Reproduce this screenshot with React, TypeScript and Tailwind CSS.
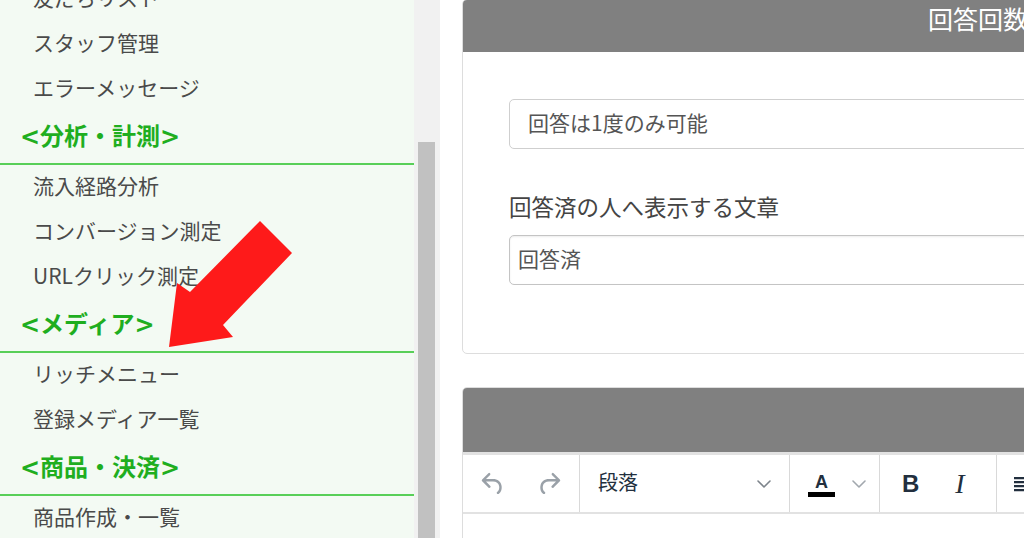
import React from "react";

const Item = ({ label }: { label: string }) => (
  <div className="h-[45px] flex items-center pl-[33px] pb-[4px] text-[21px] leading-none text-[#4a4a4a]">
    {label}
  </div>
);

const Heading = ({ label }: { label: string }) => (
  <div className="h-[53px] flex items-center pl-[20px] pb-[1px] border-b-2 border-[#58cf58] text-[24px] leading-none font-bold text-[#1fae1f] font-['DejaVu_Sans','Noto_Sans_CJK_JP',sans-serif]">
    {label}
  </div>
);

const Chevron = ({ color }: { color: string }) => (
  <svg width="14" height="8" viewBox="0 0 14 8" fill="none">
    <polyline points="1,1 7,7 13,1" stroke={color} strokeWidth="1.6" strokeLinecap="round" strokeLinejoin="round" />
  </svg>
);

export default function App() {
  return (
    <div className="relative w-[1024px] h-[538px] overflow-hidden flex bg-white font-['Noto_Sans_CJK_JP',sans-serif]">
      {/* Sidebar */}
      <div className="w-[414px] shrink-0 bg-[#f3faf3] overflow-hidden">
        <div className="-mt-[23px]">
          <Item label="友だちリスト" />
          <Item label="スタッフ管理" />
          <Item label="エラーメッセージ" />
          <Heading label="<分析・計測>" />
          <Item label="流入経路分析" />
          <Item label="コンバージョン測定" />
          <Item label="URLクリック測定" />
          <Heading label="<メディア>" />
          <Item label="リッチメニュー" />
          <Item label="登録メディア一覧" />
          <Heading label="<商品・決済>" />
          <Item label="商品作成・一覧" />
        </div>
      </div>

      {/* Scrollbar */}
      <div className="w-[26px] shrink-0 bg-[#f1f1f1] flex flex-col pl-[4px] pt-[142px]">
        <div className="w-[17px] flex-1 bg-[#c1c1c1]" />
      </div>

      {/* Main */}
      <div className="flex-1 min-w-0 pl-[22px] overflow-hidden">
        {/* Card 1 */}
        <div className="-mt-[1px] w-[700px] rounded-[5px] border border-[#dddddd] bg-white overflow-hidden">
          <div className="h-[52px] bg-[#808080] pl-[465px] text-white text-[25px] leading-[36px] whitespace-nowrap">
            回答回数制限
          </div>
          <div className="pl-[46px] pt-[47px] pb-[68px]">
            <div className="h-[50px] w-[640px] rounded-[5px] border border-[#cfcfcf] pl-[18px] pb-[4px] flex items-center text-[21px] leading-none text-[#555]">
              回答は1度のみ可能
            </div>
            <div className="mt-[42px] text-[22.5px] leading-[30px] text-[#444]">
              回答済の人へ表示する文章
            </div>
            <div className="mt-[14px] h-[50px] w-[640px] rounded-[5px] border border-[#c4c4c4] shadow-[inset_0_1px_2px_rgba(0,0,0,0.08)] pl-[8px] pb-[4px] flex items-center text-[21px] leading-none text-[#555]">
              回答済
            </div>
          </div>
        </div>

        {/* Card 2 */}
        <div className="mt-[33px] w-[700px] h-[300px] rounded-t-[5px] border border-[#dddddd] bg-white overflow-hidden">
          <div className="h-[64px] bg-[#808080]" />
          <div className="h-[62px] border-t-[3px] border-b-2 border-[#e2e2e2] flex items-stretch text-[#222f3e]">
            {/* undo/redo */}
            <div className="w-[117px] shrink-0 border-r border-[#d9d9d9] flex items-center pl-[15px] gap-[26px]">
              <svg width="30" height="30" viewBox="0 0 24 24" fill="#9aa1a8">
                <path d="M6.4 8H12c3.7 0 6.2 2 6.8 5.1.6 2.7-.4 5.6-2.3 6.8a1 1 0 0 1-1-1.8c1.1-.6 1.8-2.7 1.4-4.6-.5-2.1-2.2-3.5-4.9-3.5H6.4l3.3 3.3a1 1 0 1 1-1.4 1.4l-5-5a1 1 0 0 1 0-1.4l5-5a1 1 0 0 1 1.4 1.4L6.4 8z" />
              </svg>
              <svg width="30" height="30" viewBox="0 0 24 24" fill="#9aa1a8">
                <path d="M17.6 8H12c-3.7 0-6.2 2-6.8 5.1-.6 2.7.4 5.6 2.3 6.8a1 1 0 0 0 1-1.8c-1.1-.6-1.8-2.7-1.4-4.6.5-2.1 2.2-3.5 4.9-3.5h5.6l-3.3 3.3a1 1 0 1 0 1.4 1.4l5-5a1 1 0 0 0 0-1.4l-5-5a1 1 0 0 0-1.4 1.4L17.6 8z" />
              </svg>
            </div>
            {/* paragraph */}
            <div className="w-[210px] shrink-0 border-r border-[#d9d9d9] flex items-center justify-between pl-[18px] pr-[18px]">
              <span className="text-[20px] leading-none text-[#222f3e] pb-[3px]">段落</span>
              <Chevron color="#7d848b" />
            </div>
            {/* text color */}
            <div className="w-[90px] shrink-0 border-r border-[#d9d9d9] flex items-center pl-[18px] gap-[17px]">
              <div className="w-[27px] flex flex-col items-center pt-[4px]">
                <span className="text-[18px] leading-[14px] font-semibold font-['Liberation_Sans',sans-serif] text-[#222f3e]">A</span>
                <div className="mt-[3px] w-[27px] h-[5px] bg-black" />
              </div>
              <Chevron color="#a2a8ae" />
            </div>
            {/* bold italic */}
            <div className="w-[117px] shrink-0 border-r border-[#d9d9d9] flex items-center pl-[22px] gap-[36px]">
              <span className="text-[24px] leading-none font-bold font-['Liberation_Sans',sans-serif] text-[#222f3e]">B</span>
              <span className="text-[28px] leading-none italic font-['Liberation_Serif',serif] text-[#222f3e]">I</span>
            </div>
            {/* align */}
            <div className="flex items-center pl-[14px]">
              <svg width="24" height="24" viewBox="0 0 24 24" fill="#222f3e">
                <path d="M3 5h18v2.2H3zM3 9h18v2.2H3zM3 13h18v2.2H3zM3 17h18v2.2H3z" />
              </svg>
            </div>
          </div>
        </div>
      </div>

      {/* Red arrow annotation */}
      <svg className="absolute left-0 top-0 pointer-events-none" width="1024" height="538" viewBox="0 0 1024 538">
        <polygon points="260,221 292,253 223,325 233,337 169,347 177,283 190,292" fill="#fe1a1a" />
      </svg>
    </div>
  );
}
